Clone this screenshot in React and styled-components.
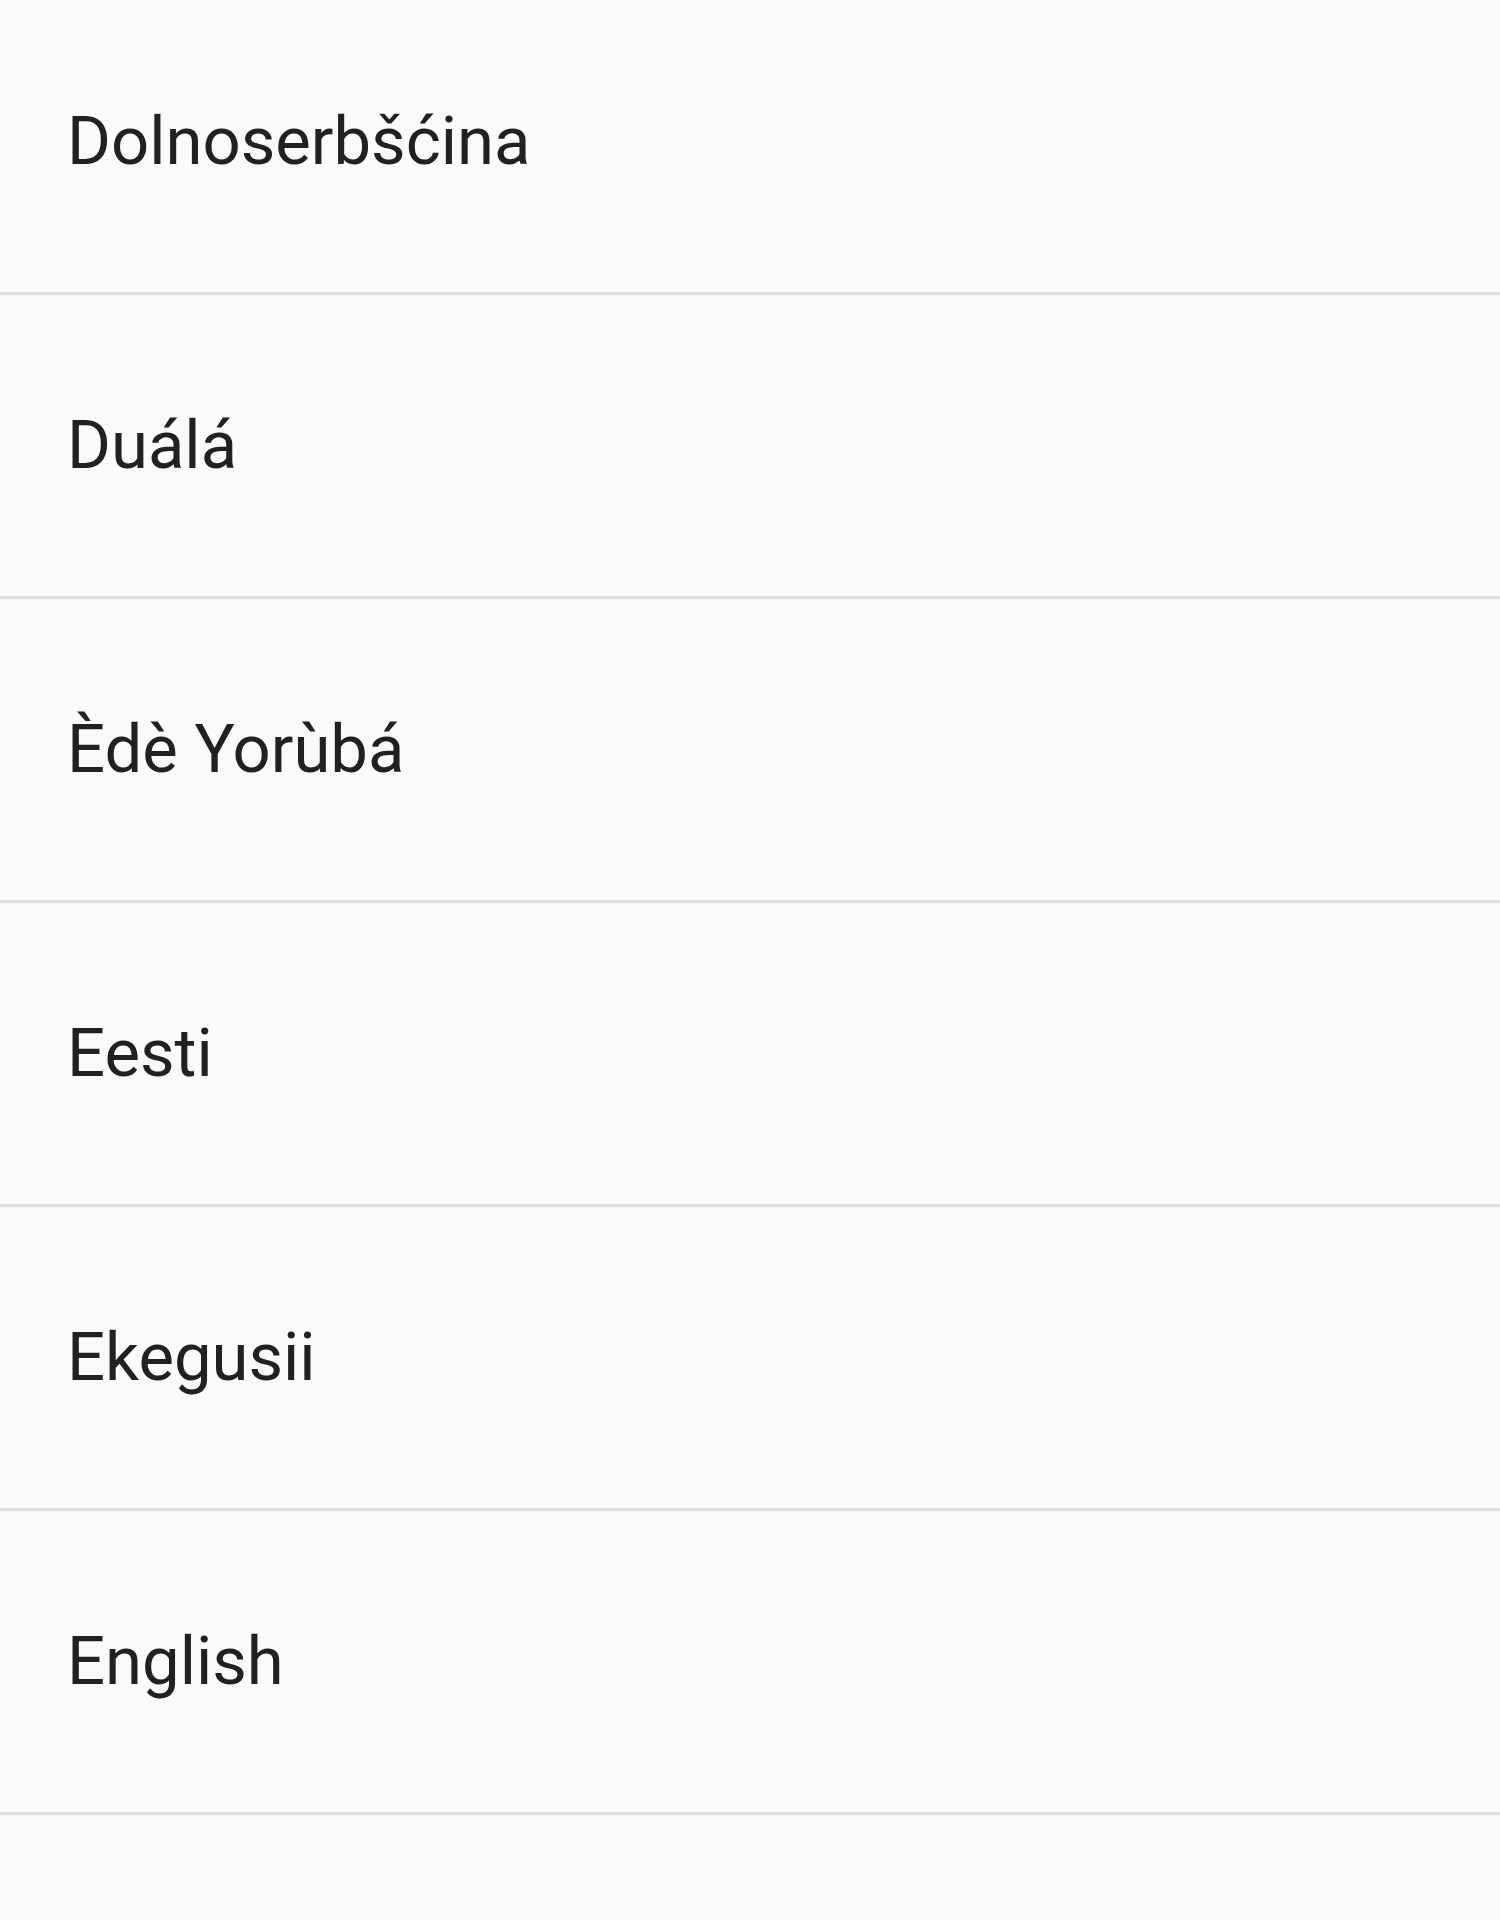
import React from "react";
import styled, { createGlobalStyle } from "styled-components";

const Global = createGlobalStyle`
  html, body { margin: 0; padding: 0; background: #fafafa; }
  body { font-family: Roboto, "Noto Sans", "Liberation Sans", sans-serif; overflow: hidden; }
`;

const List = styled.ul`
  list-style: none;
  margin: -9px 0 0 0;
  padding: 0;
  background: #fafafa;
`;

const Row = styled.li`
  height: 301px;
  display: flex;
  align-items: center;
  padding-left: 67px;
  border-bottom: 3px solid #dfdfdf;
  color: #212121;
  font-size: 67px;
  line-height: 1;
  box-sizing: content-box;
`;

const langs = [
  "Dolnoserbšćina",
  "Duálá",
  "Èdè Yorùbá",
  "Eesti",
  "Ekegusii",
  "English",
];

export default function App() {
  return (
    <>
      <Global />
      <List>
        {langs.map((l) => (
          <Row key={l}>{l}</Row>
        ))}
      </List>
    </>
  );
}
